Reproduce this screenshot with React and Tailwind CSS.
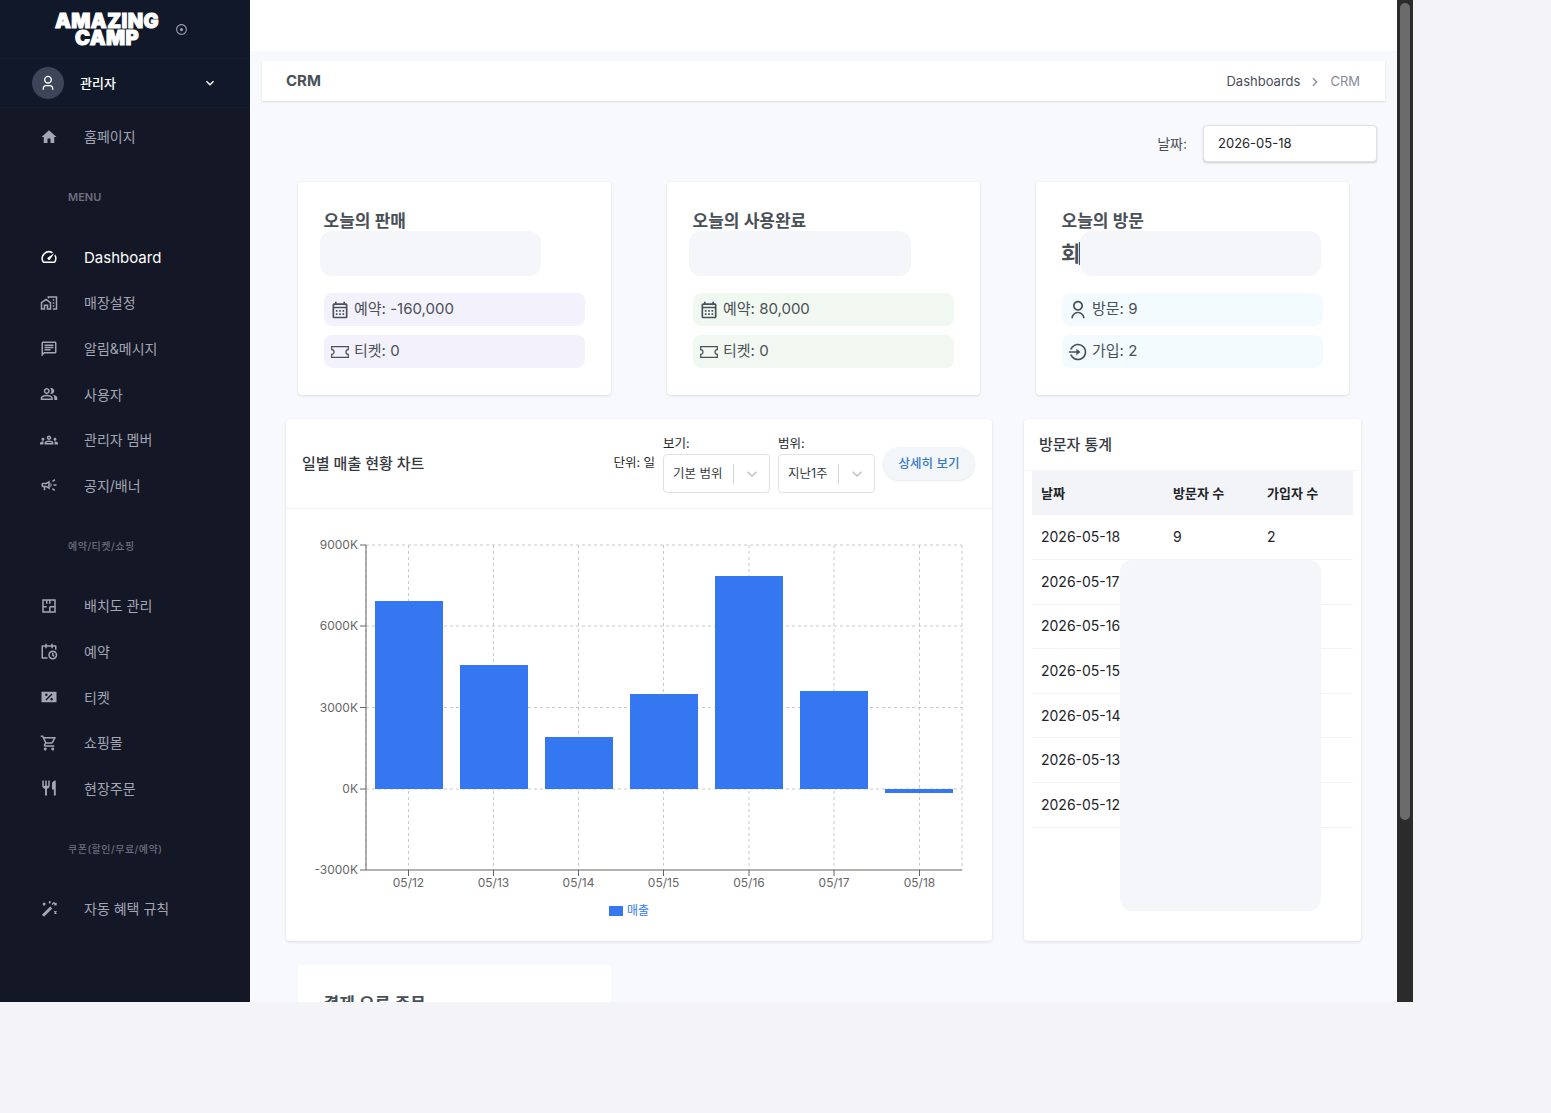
import React from 'react';
import {
  MdHome, MdOutlineCalendarMonth, MdOutlineCampaign, MdOutlineChat, MdOutlineGroups, MdOutlineKeyboardArrowDown,
  MdOutlineMapsHomeWork, MdOutlinePeopleAlt, MdOutlineShoppingCart, MdRestaurant, MdSpeed,
} from 'react-icons/md';
import {
  RiArrowRightSLine, RiCalendarScheduleLine, RiLoginCircleLine, RiRecordCircleLine, RiUser3Line, RiUserLine,
} from 'react-icons/ri';

const fontStack = "font-[Inter,'Noto_Sans_CJK_KR',sans-serif]";

// these three are not in the packages
const FloorPlanIcon = ({ size }) => (
  <svg width={size} height={size} viewBox="0 0 24 24" fill="none" stroke="currentColor" strokeWidth="2">
    <path d="M4 4h16v16H4z" />
    <path d="M4 13h5M9 4v5M13 13h7M13 13v7M13 4v5" />
  </svg>
);

const CouponIcon = ({ size }) => (
  <svg width={size} height={size} viewBox="0 0 24 24">
    <path fill="currentColor" d="M2 5h20v14H2z" />
    <path stroke="#141726" strokeWidth="2" d="M8 16l8-8" />
    <circle cx="8.5" cy="9" r="1.6" fill="#141726" />
    <circle cx="15.5" cy="15" r="1.6" fill="#141726" />
  </svg>
);

const WandIcon = ({ size }) => (
  <svg width={size} height={size} viewBox="0 0 24 24" fill="none" stroke="currentColor">
    <path strokeWidth="4" d="M4 21L15 10" />
    <path strokeWidth="1.6" d="M16 6l3-3M4 4l3 3M7 4L4 7M19 4l3 3M22 4l-3 3M19 15l3 3M22 15l-3 3M12 2l2 2M14 2l-2 2" />
  </svg>
);

const TicketIcon = ({ size }) => (
  <svg width={size} height={size} viewBox="0 0 24 24" fill="none" stroke="currentColor" strokeWidth="1.5">
    <path d="M2 5.5h20v3.7a2.8 2.8 0 0 0 0 5.6v3.7H2v-3.7a2.8 2.8 0 0 0 0-5.6z" />
  </svg>
);

const NavItem = ({ icon: Icon, label, active }) => (
  <div className={`flex h-[45.6px] items-center pl-10 ${active ? 'text-[15px] text-white' : 'text-sm text-[#a3a6b4]'}`}>
    <Icon size={18} className="shrink-0" />
    <span className="ml-[26px] pt-px">{label}</span>
  </div>
);

const NavLabel = ({ children, small }) => (
  <div className={`flex h-[75px] items-center pl-[68px] font-medium text-[#6b6e7e] ${small ? 'pt-px text-[10px] tracking-[0.5px]' : 'text-[11px] font-semibold'}`}>
    {children}
  </div>
);

const Sidebar = () => (
  <aside className="w-[250px] shrink-0 bg-[#141726]">
    <div className="flex h-[59px] items-center border-b border-[#161d30] bg-[#111829] pl-[54px]">
      <div className="w-[106px] pt-[2px] text-center text-[20px] leading-[17px] font-black tracking-[0.4px] text-white [-webkit-text-stroke:1px_white]">
        AMAZING<br />CAMP
      </div>
      <RiRecordCircleLine size={13} className="ml-[15px] text-[#9499a6]" />
    </div>
    <div className="flex h-[49px] items-center border-b border-[#161d30] bg-[#111829] pr-8 pl-8">
      <div className="flex h-8 w-8 items-center justify-center rounded-full bg-[#3c4658] text-white">
        <RiUser3Line size={16} />
      </div>
      <span className="ml-4 flex-1 pt-px text-[13px] font-medium text-white">관리자</span>
      <MdOutlineKeyboardArrowDown size={16} className="text-white" />
    </div>
    <div className="pt-[6px]">
      <NavItem icon={MdHome} label="홈페이지" />
      <NavLabel>MENU</NavLabel>
      <NavItem icon={MdSpeed} label="Dashboard" active />
      <NavItem icon={MdOutlineMapsHomeWork} label="매장설정" />
      <NavItem icon={MdOutlineChat} label="알림&메시지" />
      <NavItem icon={MdOutlinePeopleAlt} label="사용자" />
      <NavItem icon={MdOutlineGroups} label="관리자 멤버" />
      <NavItem icon={MdOutlineCampaign} label="공지/배너" />
      <NavLabel small>예약/티켓/쇼핑</NavLabel>
      <NavItem icon={FloorPlanIcon} label="배치도 관리" />
      <NavItem icon={RiCalendarScheduleLine} label="예약" />
      <NavItem icon={CouponIcon} label="티켓" />
      <NavItem icon={MdOutlineShoppingCart} label="쇼핑몰" />
      <NavItem icon={MdRestaurant} label="현장주문" />
      <NavLabel small>쿠폰(할인/무료/예약)</NavLabel>
      <NavItem icon={WandIcon} label="자동 혜택 규칙" />
    </div>
  </aside>
);

const Chip = ({ icon: Icon, text, tone }) => (
  <div className={`flex h-[33px] w-[261px] items-center gap-1 rounded-lg pl-[6px] text-[15px] text-[#495057] ${tone}`}>
    <Icon size={20} className="shrink-0" />
    <span>{text}</span>
  </div>
);

const SummaryCard = ({ title, tone, rows, skeleton, value }) => (
  <div className="relative h-[213px] w-[313px] rounded bg-white px-[26px] pt-[27px] shadow-[0_1px_3px_rgba(56,65,74,0.15)]">
    <h5 className="ml-[-0.5px] text-[17px] leading-6 font-semibold text-[#495057]">{title}</h5>
    <div className="-ml-px flex h-[42px] items-center pb-px text-[21px] font-semibold text-[#495057]">
      {value}
      {value && <span className="ml-[-1px] h-[23px] w-px bg-[#495057]" />}
    </div>
    <div className="mt-[18px] flex flex-col gap-[9px]">
      {rows.map((r) => (
        <Chip key={r.text} icon={r.icon} text={r.text} tone={tone} />
      ))}
    </div>
    <div className={`absolute top-[49px] h-[45px] rounded-xl bg-[#f5f6fa] ${skeleton}`} />
  </div>
);

const Select = ({ label, value, width, textWidth }) => (
  <div className={`${width} text-[12.5px] text-[#212529]`}>
    <div className="mb-[1px] pt-px leading-[18px]">{label}</div>
    <div className="flex h-[39px] items-center rounded border border-[#dee2e6] bg-white pl-[9px]">
      <span className={`${textWidth} pt-px text-[#343a40]`}>{value}</span>
      <span className="h-5 w-px bg-[#ced4da]" />
      <MdOutlineKeyboardArrowDown size={20} className="ml-2 text-[#c1c5cb]" />
    </div>
  </div>
);

const bars = [
  { x: 375, y: 601, h: 188 },
  { x: 460, y: 665, h: 124 },
  { x: 545, y: 737, h: 52 },
  { x: 630, y: 694, h: 95 },
  { x: 715, y: 576, h: 213 },
  { x: 800, y: 691, h: 98 },
  { x: 885, y: 789, h: 4 },
];
const gridX = [366, 408.5, 493.5, 578.5, 663.5, 749, 834, 919.5, 962];
const gridY = [545, 626, 707.5, 789];
const yTicks = [
  { y: 545, t: '9000K' },
  { y: 626, t: '6000K' },
  { y: 707.5, t: '3000K' },
  { y: 789, t: '0K' },
  { y: 870, t: '-3000K' },
];
const xTicks = ['05/12', '05/13', '05/14', '05/15', '05/16', '05/17', '05/18'];

const Chart = () => (
  <svg viewBox="286 509 706 432" className="block h-[432px] w-[706px]">
    {gridX.map((x) => (
      <line key={x} x1={x} x2={x} y1="545" y2="870" stroke="#c8c8c8" strokeDasharray="3 3" />
    ))}
    {gridY.map((y) => (
      <line key={y} x1="366" x2="962" y1={y} y2={y} stroke="#c8c8c8" strokeDasharray="3 3" />
    ))}
    {bars.map((b) => (
      <rect key={b.x} x={b.x} y={b.y} width="68" height={b.h} fill="#3577f1" />
    ))}
    <line x1="366" x2="366" y1="545" y2="870" stroke="#666" />
    <line x1="366" x2="962" y1="870" y2="870" stroke="#666" />
    {yTicks.map((t) => (
      <g key={t.t}>
        <line x1="360" x2="366" y1={t.y} y2={t.y} stroke="#666" />
        <text x="358" y={t.y + 4} textAnchor="end" fontSize="12" fill="#666">{t.t}</text>
      </g>
    ))}
    {xTicks.map((t, i) => (
      <g key={t}>
        <line x1={gridX[i + 1]} x2={gridX[i + 1]} y1="870" y2="876" stroke="#666" />
        <text x={gridX[i + 1]} y="887" textAnchor="middle" fontSize="12" fill="#666">{t}</text>
      </g>
    ))}
    <rect x="609" y="906" width="14" height="10" fill="#3577f1" />
    <text x="627" y="915" fontSize="12" fill="#3577f1">매출</text>
  </svg>
);

const visits = [
  ['2026-05-18', '9', '2'],
  ['2026-05-17'],
  ['2026-05-16'],
  ['2026-05-15'],
  ['2026-05-14'],
  ['2026-05-13'],
  ['2026-05-12'],
];

const VisitorTable = () => (
  <div className="relative h-[522px] w-[337px] rounded bg-white shadow-[0_1px_3px_rgba(56,65,74,0.15)]">
    <div className="flex h-[52px] items-center border-b border-[#f6f6f9] pt-px pl-[15px] text-[15px] font-medium text-[#343a40]">방문자 통계</div>
    <table className="mx-2 w-[321px] table-fixed text-sm text-[#212529]">
      <thead className="bg-[#f3f4f7]">
        <tr className="h-[44px] text-left text-[13px]">
          <th className="w-[132px] pl-[9px] font-semibold">날짜</th>
          <th className="w-[94px] pl-[9px] font-semibold">방문자 수</th>
          <th className="pl-[9px] font-semibold">가입자 수</th>
        </tr>
      </thead>
      <tbody>
        {visits.map((row) => (
          <tr key={row[0]} className="h-[44.6px] border-b border-[#f3f4f7]">
            <td className="pl-[9px]">{row[0]}</td>
            <td className="pl-[9px]">{row[1]}</td>
            <td className="pl-[9px]">{row[2]}</td>
          </tr>
        ))}
      </tbody>
    </table>
    <div className="absolute top-[141px] left-[96px] h-[351px] w-[201px] rounded-xl bg-[#f5f6fa]" />
  </div>
);

const Main = () => (
  <main className="h-full flex-1 overflow-hidden bg-[#f8f9fc]">
    <div className="h-[51px] bg-white" />
    <div className="mx-3 mt-[10px] flex h-10 items-center justify-between bg-white pr-[25px] pl-6 shadow-[0_1px_2px_rgba(56,65,74,0.15)]">
      <h4 className="text-[15px] font-bold text-[#495057]">CRM</h4>
      <div className="flex items-center pt-px text-[13px] text-[#495057]">
        Dashboards
        <RiArrowRightSLine size={16} className="mx-[7px] text-[#878a99]" />
        <span className="text-[#878a99]">CRM</span>
      </div>
    </div>
    <div className="mt-6 flex items-center justify-end pr-5">
      <span className="mr-4 text-sm text-[#495057]">날짜:</span>
      <div className="flex h-[37px] w-[174px] items-center rounded border border-[#dfe2e6] bg-white pl-[14px] text-[13px] text-[#212529] shadow-[0_1px_2px_rgba(56,65,74,0.25)]">
        2026-05-18
      </div>
    </div>
    <div className="mt-5 flex gap-[56px] pl-12">
      <SummaryCard
        title="오늘의 판매"
        tone="bg-[#f3f1fc]"
        skeleton="left-[22px] w-[221px]"
        rows={[{ icon: MdOutlineCalendarMonth, text: '예약: -160,000' }, { icon: TicketIcon, text: '티켓: 0' }]}
      />
      <SummaryCard
        title="오늘의 사용완료"
        tone="bg-[#f1f8f1]"
        skeleton="left-[22px] w-[222px]"
        rows={[{ icon: MdOutlineCalendarMonth, text: '예약: 80,000' }, { icon: TicketIcon, text: '티켓: 0' }]}
      />
      <SummaryCard
        title="오늘의 방문"
        tone="bg-[#f3fbfe]"
        skeleton="left-[44px] w-[241px]"
        value="회"
        rows={[{ icon: RiUserLine, text: '방문: 9' }, { icon: RiLoginCircleLine, text: '가입: 2' }]}
      />
    </div>
    <div className="mt-6 flex gap-8 pl-9">
      <div className="h-[522px] w-[706px] rounded bg-white shadow-[0_1px_3px_rgba(56,65,74,0.15)]">
        <div className="flex h-[90px] items-center justify-between border-b border-[#f3f4f7] pr-[17px] pl-4">
          <h4 className="pt-px text-[15px] font-medium text-[#343a40]">일별 매출 현황 차트</h4>
          <div className="flex items-center gap-2">
            <span className="text-[12.5px] text-[#212529]">단위: 일</span>
            <Select label="보기:" value="기본 범위" width="w-[107px]" textWidth="w-[60px]" />
            <Select label="범위:" value="지난1주" width="w-[97px]" textWidth="w-[50px]" />
            <button className="h-[33px] w-[92px] rounded-full bg-[#f3f6f9] pt-px text-[12.5px] font-medium text-[#3577c9] shadow-[0_1px_2px_rgba(56,65,74,0.12)]">상세히 보기</button>
          </div>
        </div>
        <Chart />
      </div>
      <VisitorTable />
    </div>
    <div className="mt-6 ml-12 h-[213px] w-[313px] rounded bg-white px-[26px] pt-[27px]">
      <h5 className="ml-[-0.5px] text-[17px] leading-6 font-semibold text-[#495057]">결제 오류 주문</h5>
    </div>
  </main>
);

export default function App() {
  return (
    <div className={`min-h-[1113px] bg-[#f3f3f8] ${fontStack}`}>
      <div className="flex h-[1002px] w-[1413px] overflow-hidden">
        <Sidebar />
        <Main />
        <div className="w-4 shrink-0 bg-[#2b2b2b] px-[3px] pt-[3px]">
          <div className="h-[817px] rounded-full bg-[#6b6b6b]" />
        </div>
      </div>
    </div>
  );
}
